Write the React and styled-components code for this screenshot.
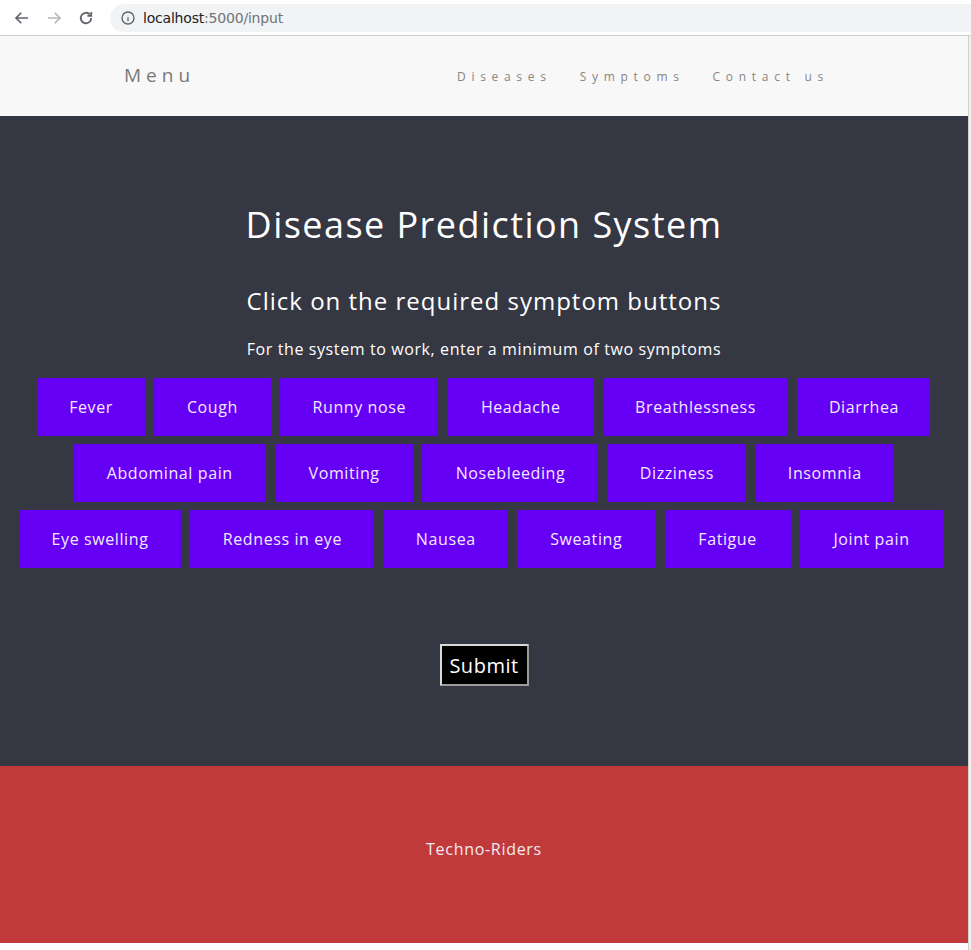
import styled, { createGlobalStyle } from 'styled-components';

const GlobalStyle = createGlobalStyle`
  html, body {
    margin: 0;
    padding: 0;
    background: #ffffff;
  }
  * {
    box-sizing: border-box;
  }
`;

const font = `'Open Sans', 'Noto Sans', sans-serif`;

// rows as laid out on the page; trail adds room on the right of a row
const symptomRows = [
  {
    trail: 0,
    items: [
      { label: 'Fever', width: 107 },
      { label: 'Cough', width: 117 },
      { label: 'Runny nose', width: 158 },
      { label: 'Headache', width: 146 },
      { label: 'Breathlessness', width: 185 },
      { label: 'Diarrhea', width: 133 },
    ],
  },
  {
    trail: 0,
    items: [
      { label: 'Abdominal pain', width: 192 },
      { label: 'Vomiting', width: 138 },
      { label: 'Nosebleeding', width: 176 },
      { label: 'Dizziness', width: 138 },
      { label: 'Insomnia', width: 139 },
    ],
  },
  {
    trail: 6,
    items: [
      { label: 'Eye swelling', width: 162 },
      { label: 'Redness in eye', width: 184 },
      { label: 'Nausea', width: 124 },
      { label: 'Sweating', width: 138 },
      { label: 'Fatigue', width: 126 },
      { label: 'Joint pain', width: 143 },
    ],
  },
];

const Window = styled.div`
  width: 971px;
  display: flex;
  flex-direction: column;
`;

const BrowserBar = styled.div`
  height: 36px;
  display: flex;
  align-items: center;
  padding-left: 13px;
  background: #ffffff;
  border-bottom: 1px solid #cfcfcf;
`;

const NavIcon = styled.svg`
  width: 18px;
  height: 18px;
  margin-right: 14px;
  flex-shrink: 0;
`;

const AddressPill = styled.div`
  flex: 1;
  height: 28px;
  margin-left: 1px;
  background: #f1f3f4;
  border-radius: 14px 0 0 14px;
  display: flex;
  align-items: center;
  padding-left: 10px;
  font-family: 'DejaVu Sans', sans-serif;
  font-size: 14px;
  color: #202124;
  letter-spacing: -0.2px;
`;

const InfoIcon = styled.svg`
  width: 16px;
  height: 16px;
  margin-right: 7px;
`;

const UrlMuted = styled.span`
  color: #6f7378;
`;

const Viewport = styled.div`
  display: flex;
`;

const Site = styled.div`
  width: 968px;
  display: flex;
  flex-direction: column;
`;

const ScrollEdge = styled.div`
  width: 3px;
  border-left: 1px solid #cfcfcf;
  background: #f1f1f1;
`;

const Navbar = styled.nav`
  height: 80px;
  background: #f8f8f8;
  display: flex;
  align-items: center;
  padding-left: 124px;
  font-family: ${font};
`;

const Brand = styled.div`
  font-size: 19px;
  letter-spacing: 5px;
  color: #7a7a7a;
  width: 333px;
  margin-top: -2px;
`;

const NavLinks = styled.div`
  display: flex;
  gap: 28px;
`;

const NavLink = styled.a`
  font-size: 12px;
  letter-spacing: 5.7px;
  color: #8a8582;
  text-decoration: none;
`;

const Main = styled.main`
  height: 650px;
  background: #353743;
  display: flex;
  flex-direction: column;
  align-items: center;
  padding-top: 84px;
  font-family: ${font};
  color: #ffffff;
`;

const Title = styled.h1`
  margin: 0;
  font-size: 36px;
  font-weight: 400;
  line-height: 50px;
  letter-spacing: 1.45px;
`;

const Subtitle = styled.h2`
  margin: 36px 0 0;
  font-size: 24px;
  font-weight: 400;
  line-height: 30px;
  letter-spacing: 1px;
`;

const Hint = styled.p`
  margin: 22px 0 0;
  font-size: 16px;
  line-height: 22px;
  letter-spacing: 0.6px;
`;

const ButtonGrid = styled.div`
  margin-top: 18px;
  display: flex;
  flex-direction: column;
  align-items: center;
  gap: 8px;
`;

const ButtonRow = styled.div`
  display: flex;
  gap: 9.4px;
  margin-right: ${({ $trail }) => $trail}px;
`;

const SymptomButton = styled.button`
  width: ${({ $width }) => $width}px;
  height: 58px;
  border: none;
  padding: 0;
  background: #6600f5;
  color: #f2eaff;
  font-family: ${font};
  font-size: 16px;
  letter-spacing: 0.6px;
  cursor: pointer;
`;

const SubmitButton = styled.button`
  margin-top: 76px;
  width: 89px;
  height: 42px;
  background: #000000;
  color: #ffffff;
  border: 2px solid #d9d9d9;
  border-right-color: #9c9c9c;
  border-bottom-color: #9c9c9c;
  font-family: ${font};
  font-size: 20px;
  letter-spacing: 0.5px;
  padding: 0;
`;

const Footer = styled.footer`
  height: 177px;
  background: #c03a3c;
  display: flex;
  align-items: center;
  justify-content: center;
  font-family: ${font};
  font-size: 16px;
  letter-spacing: 0.7px;
  color: #f4eaf0;
  padding-bottom: 12px;
`;

const BottomGap = styled.div`
  height: 7px;
  background: #ffffff;
`;

export default function App() {
  return (
    <Window>
      <GlobalStyle />
      <BrowserBar>
        <NavIcon viewBox="0 0 24 24" fill="none" stroke="#5f6368" strokeWidth="2.2">
          <path d="M20 12H5M11 5l-7 7 7 7" />
        </NavIcon>
        <NavIcon viewBox="0 0 24 24" fill="none" stroke="#b5b7ba" strokeWidth="2.2">
          <path d="M4 12h15M13 5l7 7-7 7" />
        </NavIcon>
        <NavIcon viewBox="0 0 24 24" fill="none" stroke="#5f6368" strokeWidth="2.4">
          <path d="M19 12a7 7 0 1 1-2.1-5" />
          <path d="M19 4v5h-5" fill="none" />
        </NavIcon>
        <AddressPill>
          <InfoIcon viewBox="0 0 24 24" fill="none" stroke="#5f6368" strokeWidth="2">
            <circle cx="12" cy="12" r="9" />
            <path d="M12 11v6M12 7.5v.5" />
          </InfoIcon>
          localhost<UrlMuted>:5000/input</UrlMuted>
        </AddressPill>
      </BrowserBar>
      <Viewport>
        <Site>
          <Navbar>
            <Brand>Menu</Brand>
            <NavLinks>
              <NavLink href="#">Diseases</NavLink>
              <NavLink href="#">Symptoms</NavLink>
              <NavLink href="#">Contact us</NavLink>
            </NavLinks>
          </Navbar>
          <Main>
            <Title>Disease Prediction System</Title>
            <Subtitle>Click on the required symptom buttons</Subtitle>
            <Hint>For the system to work, enter a minimum of two symptoms</Hint>
            <ButtonGrid>
              {symptomRows.map((row, i) => (
                <ButtonRow key={i} $trail={row.trail}>
                  {row.items.map((s) => (
                    <SymptomButton key={s.label} $width={s.width}>
                      {s.label}
                    </SymptomButton>
                  ))}
                </ButtonRow>
              ))}
            </ButtonGrid>
            <SubmitButton>Submit</SubmitButton>
          </Main>
          <Footer>Techno-Riders</Footer>
          <BottomGap />
        </Site>
        <ScrollEdge />
      </Viewport>
    </Window>
  );
}
